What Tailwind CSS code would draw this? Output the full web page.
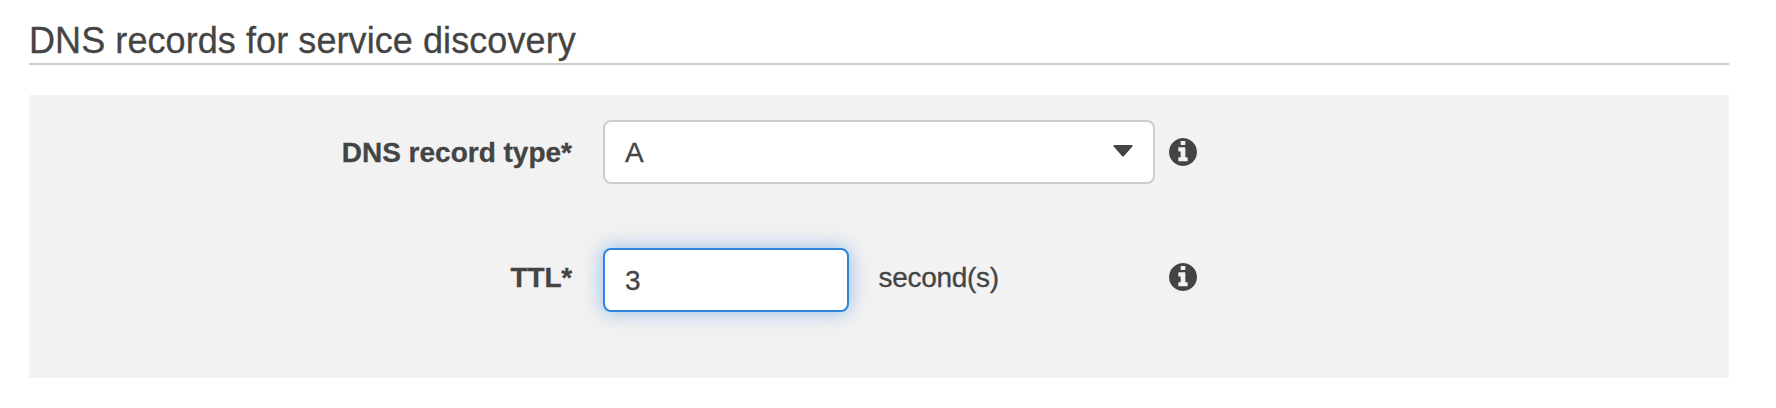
<!DOCTYPE html>
<html lang="en">
<head>
<meta charset="utf-8">
<title>DNS records for service discovery</title>
<script src="https://cdn.jsdelivr.net/npm/@tailwindcss/browser@4"></script>
</head>
<body class="overflow-hidden bg-white">
<svg class="hidden">
  <symbol id="info" viewBox="0 0 1536 1536"><path d="M1024 1248v-160q0-14-9-23t-23-9h-96v-512q0-14-9-23t-23-9h-320q-14 0-23 9t-9 23v160q0 14 9 23t23 9h96v320h-96q-14 0-23 9t-9 23v160q0 14 9 23t23 9h448q14 0 23-9t9-23zM896 352v-160q0-14-9-23t-23-9h-192q-14 0-23 9t-9 23v160q0 14 9 23t23 9h192q14 0 23-9t9-23zM1536 768q0 209-103 385.5t-279.5 279.5-385.5 103-385.5-103-279.5-279.5-103-385.5 103-385.5 279.5-279.5 385.5-103 385.5 103 279.5 279.5 103 385.5z"/></symbol>
</svg>
<main class="h-[408px] w-[1776px] pl-[29px] pr-[47px] pt-5 font-['Liberation_Sans',Arial,sans-serif] text-[28px] text-[#444] [-webkit-text-stroke:0.3px_#444]">
  <h2 class="h-[45px] whitespace-nowrap border-b-2 border-[#ccc] text-4xl leading-[41px] tracking-[0.08px]">DNS records for service discovery</h2>
  <section class="mt-[30px] flex h-[283px] flex-col gap-16 bg-[#f2f2f2] pt-[25px]">
    <div class="flex h-16 items-center">
      <label class="mr-[31px] w-[543px] whitespace-nowrap pt-0.5 text-right font-bold leading-8">DNS record type*</label>
      <div class="flex h-16 w-[552px] items-center justify-between rounded-lg border-2 border-[#ccc] bg-white pl-5 pr-5">
        <span class="pt-0.5 leading-8">A</span>
        <svg class="mb-0.5 h-3 w-5" viewBox="0 0 20 12" fill="#444"><path d="M1 0H19Q20 .6 19.4 1.4L11 11Q10 12 9 11L.6 1.4Q0 .6 1 0Z"/></svg>
      </div>
      <svg class="ml-3.5 size-7" fill="#444"><use href="#info"/></svg>
    </div>
    <div class="flex h-16 items-center">
      <label class="mr-[31px] w-[543px] pb-1 text-right font-bold leading-8 tracking-[-0.2px]">TTL*</label>
      <div class="flex h-16 w-[246px] items-center rounded-lg border-2 border-[#3184dd] bg-white pl-5 shadow-[0_0_20px_rgba(49,132,221,0.5)]"><span class="pt-0.5 leading-8">3</span></div>
      <span class="ml-[29.5px] w-[290.5px] pb-1 leading-8 tracking-[-0.3px]">second(s)</span>
      <svg class="mb-1.5 size-7" fill="#444"><use href="#info"/></svg>
    </div>
  </section>
</main>
</body>
</html>
